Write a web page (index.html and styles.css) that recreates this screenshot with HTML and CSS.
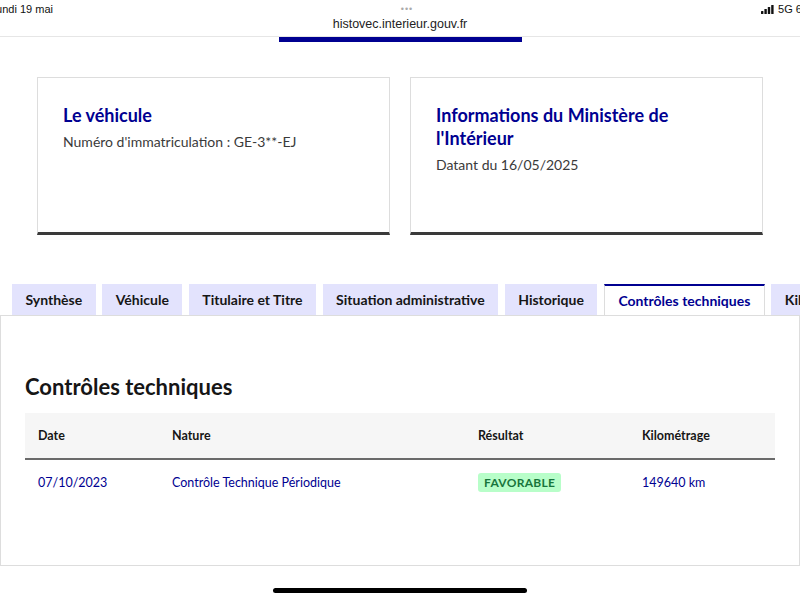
FILE: index.html
```html
<!DOCTYPE html>
<html lang="fr">
<head>
    <meta charset="UTF-8">
    <meta name="viewport" content="width=device-width, initial-scale=1.0">
    <title>HistoVec</title>
    <link rel="stylesheet" href="styles.css">
</head>
<body>
    <!-- Safari status / address bar -->
    <div class="status-bar">
        <span class="status-date">Lundi 19 mai</span>
        <span class="status-dots">•••</span>
        <span class="status-right">
            <svg class="signal" width="13" height="9" viewBox="0 0 13 9">
                <rect x="0" y="6" width="2.4" height="3" rx="0.5"/>
                <rect x="3.4" y="4" width="2.4" height="5" rx="0.5"/>
                <rect x="6.8" y="2" width="2.4" height="7" rx="0.5"/>
                <rect x="10.2" y="0" width="2.4" height="9" rx="0.5"/>
            </svg>
            5G 68
        </span>
    </div>
    <div class="url-bar">histovec.interieur.gouv.fr</div>

    <div class="page">
        <div class="header-strip"><div class="brand-bar"></div></div>

        <!-- Summary cards -->
        <div class="cards">
            <div class="card">
                <h3 class="card-title">Le véhicule</h3>
                <p class="card-text">Numéro d'immatriculation : GE-3**-EJ</p>
            </div>
            <div class="card">
                <h3 class="card-title">Informations du Ministère de l'Intérieur</h3>
                <p class="card-text">Datant du 16/05/2025</p>
            </div>
        </div>

        <!-- Tabs -->
        <div class="tabs">
            <ul class="tab-list">
                <li class="tab">Synthèse</li>
                <li class="tab">Véhicule</li>
                <li class="tab">Titulaire et Titre</li>
                <li class="tab">Situation administrative</li>
                <li class="tab">Historique</li>
                <li class="tab active">Contrôles techniques</li>
                <li class="tab">Kilométrage</li>
            </ul>
            <div class="tab-panel">
                <h2 class="panel-title">Contrôles techniques</h2>
                <table class="ct-table">
                    <colgroup>
                        <col style="width: 134px">
                        <col style="width: 306px">
                        <col style="width: 164px">
                        <col>
                    </colgroup>
                    <thead>
                        <tr>
                            <th>Date</th>
                            <th>Nature</th>
                            <th>Résultat</th>
                            <th>Kilométrage</th>
                        </tr>
                    </thead>
                    <tbody>
                        <tr>
                            <td>07/10/2023</td>
                            <td>Contrôle Technique Périodique</td>
                            <td><span class="badge">Favorable</span></td>
                            <td>149640 km</td>
                        </tr>
                    </tbody>
                </table>
            </div>
        </div>
    </div>

    <div class="home-indicator"></div>
</body>
</html>
```

FILE: styles.css
```css
html, body {
    margin: 0;
    padding: 0;
}
body {
    width: 800px;
    height: 600px;
    overflow: hidden;
    background-color: #fff;
    font-family: Lato, "Noto Sans", sans-serif;
    color: #161616;
    position: relative;
}

/* status bar */
.status-bar {
    display: flex;
    justify-content: space-between;
    align-items: center;
    height: 16px;
    padding-top: 1px;
    font-family: "Liberation Sans", Arial, sans-serif;
    font-size: 11px;
    color: #111;
}
.status-date {
    margin-left: -10px;
}
.status-dots {
    font-size: 9px;
    color: #aaa;
    letter-spacing: 1px;
}
.status-right {
    display: flex;
    align-items: center;
    gap: 4px;
    margin-right: -8px;
}
.signal {
    fill: #111;
}
.url-bar {
    text-align: center;
    font-family: "Liberation Sans", Arial, sans-serif;
    font-size: 12.5px;
    color: #222;
    height: 19px;
    border-bottom: 1px solid #e6e6e6;
}

/* header strip */
.header-strip {
    display: flex;
    justify-content: center;
}
.brand-bar {
    width: 243px;
    height: 5px;
    background-color: #000091;
}

/* cards */
.cards {
    display: grid;
    grid-template-columns: 1fr 1fr;
    gap: 20px;
    padding: 35px 37px 0;
}
.card {
    height: 158px;
    border: 1px solid #dddddd;
    border-bottom: 3px solid #3a3a3a;
    padding: 26px 25px 0;
    box-sizing: border-box;
}
.card-title {
    margin: 0;
    font-size: 18px;
    font-weight: 700;
    line-height: 23px;
    color: #000091;
    padding-right: 60px;
}
.card-text {
    margin: 4px 0 0;
    font-size: 14px;
    line-height: 22px;
    color: #3a3a3a;
}

/* tabs */
.tabs {
    margin-top: 49px;
}
.tab-list {
    display: flex;
    gap: 6.5px;
    list-style: none;
    margin: 0;
    padding: 0 0 0 12px;
    white-space: nowrap;
    overflow: hidden;
    position: relative;
    z-index: 1;
}
.tab {
    flex: none;
    height: 31px;
    line-height: 31px;
    padding: 0 13.5px;
    background-color: #e3e3fd;
    font-size: 14px;
    font-weight: 700;
    color: #161616;
}
.tab.active {
    background-color: #fff;
    color: #000091;
    border-top: 2px solid #000091;
    border-left: 1px solid #dddddd;
    border-right: 1px solid #dddddd;
    height: 30px;
    line-height: 30px;
    margin-bottom: -1px;
}
.tab-panel {
    height: 251px;
    box-sizing: border-box;
    border: 1px solid #dddddd;
    padding: 0 24px;
}
.panel-title {
    margin: 57px 0 12px;
    font-size: 22px;
    line-height: 28px;
    font-weight: 700;
}

/* table */
.ct-table {
    width: 100%;
    border-collapse: collapse;
    table-layout: fixed;
    font-size: 12.5px;
}
.ct-table th {
    background-color: #f6f6f6;
    height: 45px;
    padding: 0 13px;
    text-align: left;
    font-weight: 700;
    border-bottom: 2px solid #6a6a6a;
}
.ct-table td {
    height: 45px;
    padding: 0 13px;
    color: #000091;
}
.badge {
    display: inline-block;
    background-color: #b8fec9;
    color: #18753c;
    font-size: 12px;
    font-weight: 700;
    text-transform: uppercase;
    letter-spacing: 0.3px;
    padding: 0 6px;
    line-height: 19px;
    border-radius: 3px;
}

.home-indicator {
    position: absolute;
    left: 273px;
    bottom: 7px;
    width: 254px;
    height: 5px;
    border-radius: 3px;
    background-color: #000;
}
```
